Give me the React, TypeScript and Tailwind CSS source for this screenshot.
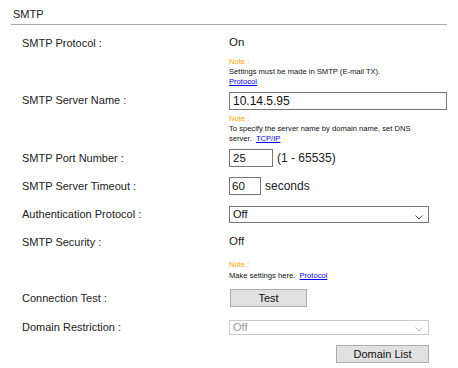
import React from "react"

const font = { fontFamily: '"Liberation Sans", Arial, sans-serif' }

function Label({ children }: { children: React.ReactNode }) {
  return <div className="w-[207px] shrink-0 text-[11px] text-[#222]">{children}</div>
}

function Note({ children, lines }: { children: React.ReactNode; lines?: string }) {
  return (
    <div className={`pl-[229px] text-[7.6px] leading-[10px] text-[#111] ${lines ?? ""}`}>
      <div className="text-[#ffa500]">Note :</div>
      {children}
    </div>
  )
}

function Link({ children }: { children: React.ReactNode }) {
  return <a className="text-[#0000ee] underline cursor-pointer">{children}</a>
}

function Chevron({ color }: { color: string }) {
  return (
    <svg width="8" height="5" viewBox="0 0 8 5" className="absolute right-[5px] bottom-[2px]">
      <path d="M0.5 0.5 L4 4 L7.5 0.5" fill="none" stroke={color} strokeWidth="1" />
    </svg>
  )
}

export default function App() {
  return (
    <div className="w-[458px] h-[368px] bg-white overflow-hidden" style={font}>
      <div className="mx-[11px] h-[25px] border-b border-[#aaaaaa] pl-[2px] pt-[6px] text-[11px] text-[#222]">
        SMTP
      </div>

      <div className="pl-[22px]">
        <div className="flex items-center h-[28px] mt-[4px]">
          <Label>SMTP Protocol :</Label>
          <span className="text-[11.5px] text-[#222]">On</span>
        </div>
      </div>

      <Note>
        <div>Settings must be made in SMTP (E-mail TX).</div>
        <div><Link>Protocol</Link></div>
      </Note>

      <div className="pl-[22px]">
        <div className="flex items-center h-[27px]">
          <Label>SMTP Server Name :</Label>
          <div className="w-[218px] h-[18px] border border-[#767676] pl-[3px] text-[12px] leading-[16px] text-[#111]">
            10.14.5.95
          </div>
        </div>
      </div>

      <Note>
        <div>To specify the server name by domain name, set DNS</div>
        <div>server.&nbsp; <Link>TCP/IP</Link></div>
      </Note>

      <div className="pl-[22px]">
        <div className="flex items-center h-[28px]">
          <Label>SMTP Port Number :</Label>
          <div className="w-[44px] h-[18px] border border-[#767676] pl-[3px] text-[11.5px] leading-[16px] text-[#111]">
            25
          </div>
          <span className="ml-[4px] text-[12px] text-[#222]">(1 - 65535)</span>
        </div>

        <div className="flex items-center h-[28px]">
          <Label>SMTP Server Timeout :</Label>
          <div className="w-[32px] h-[18px] border border-[#767676] pl-[2px] text-[11.5px] leading-[16px] text-[#111]">
            60
          </div>
          <span className="ml-[4px] text-[12px] text-[#222]">seconds</span>
        </div>

        <div className="flex items-center h-[28px]">
          <Label>Authentication Protocol :</Label>
          <div className="relative w-[200px] h-[17px] border border-[#767676] pl-[3px] text-[11px] leading-[15px] text-[#111]">
            Off
            <Chevron color="#555" />
          </div>
        </div>

        <div className="flex items-center h-[28px]">
          <Label>SMTP Security :</Label>
          <span className="text-[11.5px] text-[#222]">Off</span>
        </div>
      </div>

      <Note lines="mt-[3px] leading-[11px]">
        <div>Make settings here.&nbsp; <Link>Protocol</Link></div>
      </Note>

      <div className="pl-[22px]">
        <div className="flex items-center h-[28px] mt-[3px]">
          <Label>Connection Test :</Label>
          <button className="ml-[1px] w-[77px] h-[18px] bg-[#e1e1e1] border border-[#adadad] text-[11px] text-[#111]">
            Test
          </button>
        </div>

        <div className="flex items-center h-[30px]">
          <Label>Domain Restriction :</Label>
          <div className="relative w-[200px] h-[15px] border border-[#cccccc] pl-[3px] text-[11px] leading-[13px] text-[#9a9a9a]">
            Off
            <Chevron color="#bbb" />
          </div>
        </div>

        <div className="flex mt-[3px] pl-[314px]">
          <button className="w-[93px] h-[18px] bg-[#e1e1e1] border border-[#adadad] text-[11px] text-[#111]">
            Domain List
          </button>
        </div>
      </div>
    </div>
  )
}
